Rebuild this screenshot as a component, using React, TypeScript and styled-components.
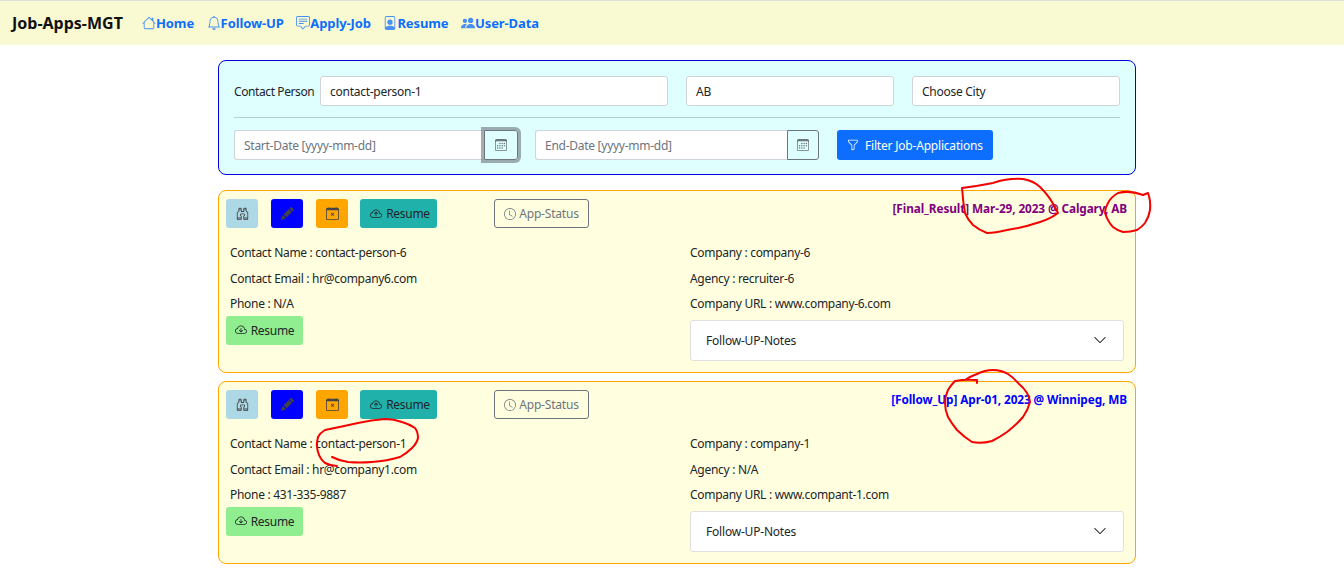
import React from "react";
import styled, { createGlobalStyle } from "styled-components";
import {
  BsBell,
  BsBinoculars,
  BsCalendar3,
  BsCalendarX,
  BsChatSquareText,
  BsChevronDown,
  BsClock,
  BsCloudArrowDown,
  BsCloudArrowUp,
  BsFilePerson,
  BsFunnel,
  BsHouse,
  BsPencilFill,
  BsPeopleFill,
} from "react-icons/bs";

const GlobalStyle = createGlobalStyle`
  html, body {
    margin: 0;
    padding: 0;
    background: #ffffff;
    font-family: "Noto Sans", "Open Sans", sans-serif;
    color: #212529;
  }
`;

const Page = styled.div`
  position: relative;
  width: 1344px;
  height: 586px;
  overflow: hidden;
`;

const NavBar = styled.nav`
  display: flex;
  align-items: center;
  height: 44px;
  padding-left: 12px;
  background: #fafad2;
  border-top: 1px solid #e0e0e0;
`;

const Brand = styled.span`
  width: 130px;
  font-size: 16px;
  font-weight: 700;
  color: #111111;
`;

const NavLink = styled.a`
  display: flex;
  align-items: center;
  margin-right: 12.5px;
  font-size: 13px;
  font-weight: 700;
  letter-spacing: -0.1px;
  color: #0d6efd;

  svg {
    font-size: 14px;
    opacity: 0.75;
  }
`;

const Main = styled.main`
  width: 918px;
  margin: 15px 0 0 218px;
`;

const FilterPanel = styled.section`
  box-sizing: border-box;
  height: 115px;
  margin-bottom: 15px;
  padding: 15px;
  background: #dfffff;
  border: 1px solid #0000e0;
  border-radius: 8px;
`;

const FilterRow = styled.div`
  display: flex;
  align-items: center;
`;

const Label = styled.label`
  width: 86px;
  font-size: 12px;
  letter-spacing: -0.4px;
`;

const Field = styled.div<{ $w: number; $gap?: number }>`
  box-sizing: border-box;
  width: ${(p) => p.$w}px;
  height: 30px;
  margin-right: ${(p) => p.$gap ?? 0}px;
  padding: 0 9px;
  background: #ffffff;
  border: 1px solid #ced4da;
  border-radius: 3px;
  font-size: 12px;
  line-height: 29.5px;
  letter-spacing: -0.27px;
  color: ${(p) => (p.$gap === undefined ? "#6c757d" : "#212529")};
`;

const Divider = styled.hr`
  height: 1px;
  margin: 11px 0 12px;
  border: 0;
  background: #b4cfd2;
`;

const DateField = styled(Field)`
  border-radius: 3px 0 0 3px;
  border-right: 0;
`;

const CalendarButton = styled.button<{ $focused?: boolean; $gap: number }>`
  display: flex;
  align-items: center;
  justify-content: center;
  box-sizing: border-box;
  width: ${(p) => (p.$focused ? 34 : 32)}px;
  height: 30px;
  margin-right: ${(p) => p.$gap}px;
  padding: 0;
  background: transparent;
  border: 1px solid #6c757d;
  border-radius: 0 3px 3px 0;
  font-size: 12px;
  color: #6c757d;
  box-shadow: ${(p) => (p.$focused ? "0 0 0 3px rgba(108,117,125,0.6)" : "none")};
`;

const FilterButton = styled.button`
  display: flex;
  align-items: center;
  gap: 6px;
  box-sizing: border-box;
  width: 156px;
  height: 30px;
  padding: 0 10px;
  background: #0d6efd;
  border: 0;
  border-radius: 3px;
  font-family: inherit;
  font-size: 12px;
  letter-spacing: -0.2px;
  white-space: nowrap;
  color: #ffffff;
`;

const Card = styled.article`
  box-sizing: border-box;
  height: 183px;
  margin-bottom: 8px;
  padding: 8px 7px;
  background: #ffffdf;
  border: 1px solid #ffa500;
  border-radius: 8px;
`;

const CardHead = styled.header`
  display: flex;
  align-items: flex-start;
  height: 30px;
`;

const IconButton = styled.button<{ $bg: string; $gap: number }>`
  display: flex;
  align-items: center;
  justify-content: center;
  box-sizing: border-box;
  width: 32px;
  height: 29px;
  margin-right: ${(p) => p.$gap}px;
  padding: 0;
  background: ${(p) => p.$bg};
  border: 0;
  border-radius: 3px;
  font-size: 13px;
  color: #444444;
`;

const TextButton = styled.button<{ $bg: string; $w: number }>`
  display: flex;
  align-items: center;
  justify-content: center;
  gap: 4px;
  box-sizing: border-box;
  width: ${(p) => p.$w}px;
  height: 29px;
  padding: 0;
  background: ${(p) => p.$bg};
  border: 0;
  border-radius: 3px;
  font-family: inherit;
  font-size: 12px;
  letter-spacing: -0.3px;
  color: #212529;
`;

const UploadButton = styled(TextButton)`
  svg {
    margin-left: 3px;
  }
`;

const DownloadButton = styled(TextButton)`
  margin-top: -1px;
`;

const StatusButton = styled.button`
  display: flex;
  align-items: center;
  justify-content: center;
  gap: 3px;
  box-sizing: border-box;
  width: 95px;
  height: 29px;
  margin-left: 57px;
  padding: 0;
  background: transparent;
  border: 1px solid #6c757d;
  border-radius: 3px;
  font-family: inherit;
  font-size: 12px;
  letter-spacing: -0.2px;
  color: #6c757d;
`;

const Headline = styled.strong<{ $color: string }>`
  margin-left: auto;
  padding: 1px 1px 0 0;
  font-size: 11.8px;
  font-weight: 700;
  letter-spacing: -0.1px;
  color: ${(p) => p.$color};
`;

const CardBody = styled.div`
  display: grid;
  grid-template-columns: 464px 434px;
  margin-top: 11px;
`;

const Detail = styled.p<{ $inset?: boolean }>`
  height: 25.5px;
  margin: 0;
  padding-left: ${(p) => (p.$inset ? 4 : 0)}px;
  font-size: 12px;
  line-height: 25.5px;
  letter-spacing: -0.3px;
  white-space: nowrap;
`;

const Notes = styled.div`
  display: flex;
  align-items: center;
  justify-content: space-between;
  box-sizing: border-box;
  height: 41px;
  margin-top: 3px;
  padding: 0 16px 0 15px;
  background: #ffffff;
  border: 1px solid #dfdfdf;
  border-radius: 3px;
  font-size: 12px;
  letter-spacing: -0.2px;

  svg {
    font-size: 14px;
  }
`;

const Markup = styled.svg`
  position: absolute;
  top: 0;
  left: 0;
  pointer-events: none;
`;

const Scribble = styled.path`
  fill: none;
  stroke: #f40000;
  stroke-width: 2;
  stroke-linecap: round;
  stroke-linejoin: round;
`;

type Application = {
  status: string;
  statusColor: string;
  when: string;
  person: string;
  email: string;
  phone: string;
  company: string;
  agency: string;
  url: string;
};

const applications: Application[] = [
  {
    status: "[Final_Result]",
    statusColor: "#800080",
    when: "Mar-29, 2023 @ Calgary, AB",
    person: "contact-person-6",
    email: "hr@company6.com",
    phone: "N/A",
    company: "company-6",
    agency: "recruiter-6",
    url: "www.company-6.com",
  },
  {
    status: "[Follow_Up]",
    statusColor: "#0000ff",
    when: "Apr-01, 2023 @ Winnipeg, MB",
    person: "contact-person-1",
    email: "hr@company1.com",
    phone: "431-335-9887",
    company: "company-1",
    agency: "N/A",
    url: "www.compant-1.com",
  },
];

const scribbles = [
  "M962 188 Q978 186 993 183 Q1008 178 1023 179 Q1034 181 1040 187 Q1048 195 1052 202 Q1056 209 1058 213 Q1050 219 1040 222 Q1022 228 1007 230 Q995 233 987 233 Q979 230 973 225 Q968 220 965 213 Q963 202 962 188",
  "M1148 193 L1143 195 Q1130 190 1118 193 Q1111 197 1108 203 Q1105 208 1105 213 Q1108 222 1113 227 Q1118 231 1123 232 Q1131 232 1137 230 Q1142 227 1145 223 Q1149 217 1150 210 Q1151 201 1148 193",
  "M965 380 Q971 376 977 374 Q985 370 993 370 Q1001 370 1008 374 Q1014 378 1018 383 Q1024 388 1027 393 Q1030 398 1030 402 Q1028 410 1023 417 Q1016 425 1007 432 Q1000 437 992 441 Q981 444 972 442 Q964 437 957 430 Q952 424 948 417 Q945 410 945 403 Q945 396 948 390 Q951 385 955 381 Q965 379 977 380 L977 383",
  "M332 457 Q340 461 348 462 Q360 463 372 462 Q387 461 400 457 Q407 453 412 448 Q417 443 418 438 Q418 432 415 428 Q409 424 402 422 Q394 419 385 419 Q371 420 358 423 Q340 427 325 430 Q320 433 318 437 Q316 445 318 452 Q320 459 325 463 Q331 466 337 466",
];

function ApplicationCard({ app }: { app: Application }) {
  return (
    <Card>
      <CardHead>
        <IconButton $bg="#add8e6" $gap={13}>
          <BsBinoculars />
        </IconButton>
        <IconButton $bg="#0000ff" $gap={13}>
          <BsPencilFill />
        </IconButton>
        <IconButton $bg="#ffa500" $gap={12}>
          <BsCalendarX />
        </IconButton>
        <UploadButton $bg="#20b2aa" $w={77}>
          <BsCloudArrowUp />
          Resume
        </UploadButton>
        <StatusButton>
          <BsClock />
          App-Status
        </StatusButton>
        <Headline $color={app.statusColor}>
          {app.status} {app.when}
        </Headline>
      </CardHead>
      <CardBody>
        <div>
          <Detail $inset>Contact Name : {app.person}</Detail>
          <Detail $inset>Contact Email : {app.email}</Detail>
          <Detail $inset>Phone : {app.phone}</Detail>
          <DownloadButton $bg="#90ee90" $w={77}>
            <BsCloudArrowDown />
            Resume
          </DownloadButton>
        </div>
        <div>
          <Detail>Company : {app.company}</Detail>
          <Detail>Agency : {app.agency}</Detail>
          <Detail>Company URL : {app.url}</Detail>
          <Notes>
            Follow-UP-Notes
            <BsChevronDown />
          </Notes>
        </div>
      </CardBody>
    </Card>
  );
}

export default function App() {
  return (
    <Page>
      <GlobalStyle />
      <NavBar>
        <Brand>Job-Apps-MGT</Brand>
        <NavLink>
          <BsHouse />
          Home
        </NavLink>
        <NavLink>
          <BsBell />
          Follow-UP
        </NavLink>
        <NavLink>
          <BsChatSquareText />
          Apply-Job
        </NavLink>
        <NavLink>
          <BsFilePerson />
          Resume
        </NavLink>
        <NavLink>
          <BsPeopleFill />
          User-Data
        </NavLink>
      </NavBar>
      <Main>
        <FilterPanel>
          <FilterRow>
            <Label>Contact Person</Label>
            <Field $w={348} $gap={18}>contact-person-1</Field>
            <Field $w={208} $gap={18}>AB</Field>
            <Field $w={208} $gap={0}>Choose City</Field>
          </FilterRow>
          <Divider />
          <FilterRow>
            <DateField $w={250}>Start-Date [yyyy-mm-dd]</DateField>
            <CalendarButton $focused $gap={17}>
              <BsCalendar3 />
            </CalendarButton>
            <DateField $w={252}>End-Date [yyyy-mm-dd]</DateField>
            <CalendarButton $gap={18}>
              <BsCalendar3 />
            </CalendarButton>
            <FilterButton>
              <BsFunnel />
              Filter Job-Applications
            </FilterButton>
          </FilterRow>
        </FilterPanel>
        {applications.map((app) => (
          <ApplicationCard key={app.person} app={app} />
        ))}
      </Main>
      <Markup width="1344" height="586" viewBox="0 0 1344 586">
        {scribbles.map((d) => (
          <Scribble key={d} d={d} />
        ))}
      </Markup>
    </Page>
  );
}
